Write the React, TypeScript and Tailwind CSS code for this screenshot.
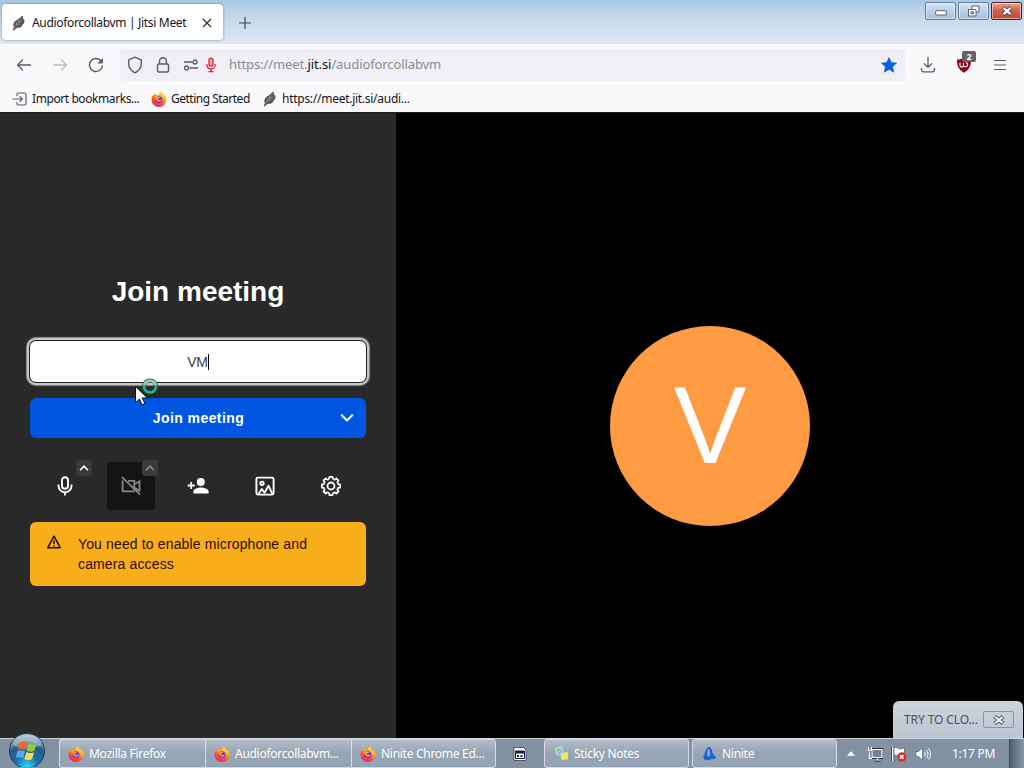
import type { ReactNode } from 'react'
import { clsx } from 'clsx'

function Feather({ className }: { className?: string }) {
  return (
    <svg viewBox="0 0 16 16" className={clsx('size-4 shrink-0', className)}>
      <path d="M11.300.5c.7 1 .8 2 .4 3 1.200.4 1.800 1.500 1.800 2.800-.1 2-1.200 3-2.300 3.700.2 1-.8 2.200-2.200 2.400-1.600.4-2.800 0-4.200 1L2.500 15.500l-.9-.5 1.300-2.500c-.9-2-.6-4.500.9-6C5.200 4.800 7.300 4.500 8.300 3.300 9.200 2.400 10.300 1.500 11.300.5z" fill="#55565a" />
      <path d="M3.500 12.500L10.500 3.500M5.500 10V7M5.200 10.600l4.300-1.600M7.200 8l4-1.900M7.400 7.300L8 4.800" stroke="#a4a5a8" strokeWidth=".6" fill="none" />
    </svg>
  )
}

function Firefox({ id }: { id: string }) {
  return (
    <svg viewBox="0 0 16 16" className="size-4 shrink-0">
      <defs>
        <linearGradient id={id} x1=".8" y1="0" x2=".25" y2="1">
          <stop offset="0" stopColor="#fff04c" />
          <stop offset=".35" stopColor="#ffae20" />
          <stop offset=".65" stopColor="#ff5036" />
          <stop offset="1" stopColor="#e91e68" />
        </linearGradient>
      </defs>
      <path d="M9.300.4c1.200.7 2 1.800 2.500 2.900.5.400 1 .8 1.200 1.400.1-.5 0-.9-.1-1.300 1.700 1.300 2.600 3.100 2.600 5.100a7.500 7.500 0 0 1-15 .2c0-2.200.8-3.700 1.600-4.700 0 .5.100.8.200 1.100.3-1.300 1-2.300 2.100-3-.1.800.2 1.400.7 1.800.8 0 1.500.1 2.300.4C7.800 3 8.300 1.600 9.300.4z" fill={`url(#${id})`} />
      <circle cx="8" cy="8.700" r="3.500" fill="#7542d6" />
      <path d="M3 5.300c1.300-.8 2.900-.5 3.900.5 1 .1 1.900.1 2 .6-.3.800-1.600.9-2 1.300-.2.700.4 1.400 1.300 1.300 1-.1 1.700-.6 2.500-.1-.5 1.500-2 2-3.300 1.500C5.500 10.200 5.200 8.100 3 5.300z" fill="#ff9a20" />
    </svg>
  )
}

function WindowButtons() {
  const base = 'flex h-[18px] items-center justify-center rounded-[2px] border shadow-[inset_0_0_0_1px_#ffffff80]'
  return (
    <div className="flex h-[20px] gap-[2px] pt-[2px] pr-[2px]">
      <div className={clsx(base, 'w-[31px] border-[#5f7c9e] bg-linear-to-b from-[#d7e5f4] via-[#bed2e8] via-45% to-[#a5bfdc]')}>
        <svg viewBox="0 0 12 6" className="mt-[4px] h-[6px] w-3">
          <rect x=".7" y=".7" width="10.600" height="4.300" rx=".5" fill="#fff" stroke="#55647a" />
        </svg>
      </div>
      <div className={clsx(base, 'w-[31px] border-[#5f7c9e] bg-linear-to-b from-[#d7e5f4] via-[#bed2e8] via-45% to-[#a5bfdc]')}>
        <svg viewBox="0 0 14 12" className="h-3 w-[14px]" fill="#fff" stroke="#55647a">
          <path d="M5 1h7v6H5z" />
          <path d="M1.500 4.500h7.500v6.500H1.500z" />
          <path d="M4 6.800h2.500v2H4z" fill="#9fb6d0" />
        </svg>
      </div>
      <div className={clsx(base, 'w-[31px] border-[#5c1d1c] bg-linear-to-b from-[#e5a696] via-[#cf6450] via-45% to-[#c24331]')}>
        <svg viewBox="0 0 12 10" className="h-[10px] w-3">
          <path d="M2.200 1.500l7.600 7M9.800 1.500l-7.600 7" stroke="#5a3440" strokeWidth="4" />
          <path d="M2.500 1.800l7 6.400M9.500 1.800l-7 6.400" stroke="#fff" strokeWidth="2.400" />
        </svg>
      </div>
    </div>
  )
}

function TabStrip() {
  return (
    <div className="flex h-11 items-start bg-linear-to-b from-[#a9c8e4] via-[#c5daec] via-40% to-[#dce9f4]">
      <div className="mt-[4px] ml-[2px] flex h-9 w-[221px] items-center rounded bg-white pt-px pl-[9px] shadow-[0_0_3px_#0000005c]">
        <Feather />
        <span className="ml-[5px] w-[155px] text-[12px] tracking-[-0.32px] whitespace-nowrap text-[#15141a]">
          Audioforcollabvm | Jitsi Meet
        </span>
        <svg viewBox="0 0 10 10" className="ml-[15px] size-[10px]" stroke="#2b2a33" strokeWidth="1.100">
          <path d="M1 1l8 8M9 1L1 9" />
        </svg>
      </div>
      <svg viewBox="0 0 12 12" className="mt-[17px] ml-[16px] size-3" stroke="#45464d" strokeWidth="1.200">
        <path d="M6 0v12M0 6h12" />
      </svg>
      <div className="flex-1" />
      <WindowButtons />
    </div>
  )
}

function NavBar() {
  return (
    <div className="flex h-[42px] items-center bg-[#f9f9fb] pl-4 text-[#5b5b66]">
      <svg viewBox="0 0 16 16" className="size-4" fill="none" stroke="currentColor" strokeWidth="1.300" strokeLinecap="round" strokeLinejoin="round">
        <path d="M14.500 8H1.500M6.500 3L1.500 8l5 5" />
      </svg>
      <svg viewBox="0 0 16 16" className="ml-[20px] size-4 text-[#bcbcc2]" fill="none" stroke="currentColor" strokeWidth="1.300" strokeLinecap="round" strokeLinejoin="round">
        <path d="M1.500 8h13M9.500 3l5 5-5 5" />
      </svg>
      <svg viewBox="0 0 16 16" className="ml-[20px] size-4" fill="none" stroke="currentColor" strokeWidth="1.400">
        <path d="M13.300 4.200A6.500 6.500 0 1 0 14.500 8.500" />
        <path d="M14.900 1v5.500H9.400z" fill="currentColor" stroke="none" />
      </svg>
      <div className="ml-4 flex h-8 w-[785px] items-center rounded bg-[#f0f0f4] pl-[7px]">
        <svg viewBox="0 0 16 18" className="h-[18px] w-4" fill="none" stroke="currentColor" strokeWidth="1.400" strokeLinejoin="round">
          <path d="M8 1.200l6.300 2.600v3.700c0 4.400-2.700 7.500-6.300 9.300-3.600-1.800-6.300-4.900-6.300-9.300V3.800z" />
        </svg>
        <svg viewBox="0 0 14 16" className="ml-[13px] h-4 w-[14px]" fill="none" stroke="currentColor" strokeWidth="1.400">
          <path d="M3.500 7V4.200a3.400 3.400 0 0 1 6.900 0V7" />
          <rect x="1.500" y="7" width="11" height="8" rx="1.300" />
        </svg>
        <svg viewBox="0 0 16 12" className="ml-[13px] h-3 w-4" fill="none" stroke="currentColor" strokeWidth="1.300">
          <path d="M1 3h8.500M6.500 9H15" />
          <circle cx="12" cy="3" r="2" />
          <circle cx="3.500" cy="9" r="2" />
        </svg>
        <svg viewBox="0 0 10 16" className="ml-[7px] h-4 w-[10px]" fill="none" stroke="#d7263f" strokeWidth="1.300">
          <rect x="3" y="1.200" width="4" height="8" rx="2" fill="#f3a3ae" />
          <path d="M.8 7v.8a4.200 4.200 0 0 0 8.400 0V7M5 12v2.500M2.500 14.700h5" />
        </svg>
        <span className="ml-[13px] text-[13px] tracking-[-0.1px] whitespace-nowrap text-[#8a8a94]">
          https://meet.<span className="text-[#15141a]">jit.si</span>/audioforcollabvm
        </span>
        <div className="flex-1" />
        <svg viewBox="0 0 16 16" className="mr-2 size-4">
          <path d="M8 .6l2.300 4.900 5.300.6-4 3.600 1.200 5.500L8 12.500l-4.800 2.700 1.200-5.500-4-3.600 5.300-.6z" fill="#0761e2" stroke="#0761e2" strokeLinejoin="round" strokeWidth=".6" />
        </svg>
      </div>
      <svg viewBox="0 0 16 16" className="ml-[15px] size-4" fill="none" stroke="currentColor" strokeWidth="1.300" strokeLinecap="round" strokeLinejoin="round">
        <path d="M8 .5v9.500M4.300 6.800L8 10.200l3.700-3.400M1.500 11.500v1.300a2 2 0 0 0 2 2h9a2 2 0 0 0 2-2v-1.300" />
      </svg>
      <div className="relative ml-5 size-4">
        <svg viewBox="0 0 16 16" className="size-4">
          <path d="M8 .5C6 2 3.500 2.500 1 2.600 1 9 2.500 12.800 8 15.700 13.500 12.800 15 9 15 2.600 12.500 2.500 10 2 8 .5z" fill="#8f0010" />
          <path d="M4 5.500v3a1.700 1.700 0 0 0 3.400 0v-2.500M7.400 8.500c.3 1.900 4.300 1.700 4.300-.8 0-1.200-.8-1.900-2-1.900" fill="none" stroke="#fff" strokeWidth="1.100" />
        </svg>
        <span className="absolute top-[-6px] left-[6px] flex h-[11px] w-[14px] items-center justify-center rounded-[2px] bg-[#646468] text-[9px] font-bold text-white">
          2
        </span>
      </div>
      <svg viewBox="0 0 12 12" className="ml-[22px] size-3" stroke="currentColor" strokeWidth="1.200">
        <path d="M0 1.500h12M0 6h12M0 10.500h12" />
      </svg>
    </div>
  )
}

function Bookmarks() {
  return (
    <div className="flex h-[26px] items-center bg-[#f9f9fb] pl-[12px] text-[12px] whitespace-nowrap text-[#15141a]">
      <svg viewBox="0 0 16 14" className="h-[14px] w-4" fill="none" stroke="#5b5b66" strokeWidth="1.200">
        <path d="M5 4V2.500a1.500 1.500 0 0 1 1.500-1.500h6A1.500 1.500 0 0 1 14 2.500v9a1.500 1.500 0 0 1-1.500 1.500h-6A1.500 1.500 0 0 1 5 11.500V10M.5 7H10M7.500 4.200L10.300 7 7.500 9.800" />
      </svg>
      <span className="ml-[4px] w-[108px] tracking-[-0.42px]">Import bookmarks...</span>
      <div className="ml-[11px] flex">
        <Firefox id="ff-bookmark" />
      </div>
      <span className="ml-[4px] w-[79px] tracking-[-0.5px]">Getting Started</span>
      <Feather className="ml-[12px]" />
      <span className="ml-[4px] tracking-[-0.27px]">https://meet.jit.si/audi...</span>
    </div>
  )
}

function Chevron({ dim }: { dim?: boolean }) {
  return (
    <span className="absolute -top-[2px] -right-[3px] flex size-4 items-center justify-center rounded-[3px] bg-[#3a3a3b]">
      <svg viewBox="0 0 10 6" className="h-[6px] w-[10px]" fill="none" stroke={dim ? '#8b8b8c' : '#fff'} strokeWidth="1.600">
        <path d="M1 5.200L5 1.200l4 4" />
      </svg>
    </span>
  )
}

function ToolButton({ children, off, menu }: { children: ReactNode; off?: boolean; menu?: boolean }) {
  return (
    <div className={clsx('relative flex size-12 items-center justify-center rounded-[3px]', off && 'bg-[#141414]')}>
      {children}
      {menu && <Chevron dim={off} />}
    </div>
  )
}

const teeth = Array.from({ length: 8 }, (_, i) => i * 45)

function Toolbox() {
  return (
    <div className="mt-6 ml-[11px] flex gap-[19px] self-start">
      <div className="-mr-px">
        <ToolButton menu>
          <svg viewBox="0 0 24 24" className="size-6" fill="none" stroke="#fff" strokeWidth="1.900">
            <rect x="9" y="3.300" width="6" height="11.400" rx="3" />
            <path d="M5.500 10.500v1.300a6.500 6.500 0 0 0 13 0v-1.300M12 18.300V21.500" />
          </svg>
        </ToolButton>
      </div>
      <ToolButton off menu>
        <svg viewBox="0 0 24 24" className="size-6" fill="none" stroke="#858586" strokeWidth="1.800">
          <path d="M3.600 6.500v10.800h12M9 6.800h6.300v9M15.500 10.300l5-3v9.500l-5-3M3 3.200l18 17.500" />
        </svg>
      </ToolButton>
      <ToolButton>
        <svg viewBox="0 0 24 24" className="size-6" fill="#fff">
          <circle cx="14.800" cy="8" r="4" />
          <path d="M7.400 19.500v-2c0-2.800 5-4 7.500-4s7.700 1.200 7.700 4v2zM4.300 8h1.800v2.600h2.700v1.800H6.100V15H4.300v-2.600H1.700v-1.800h2.600z" />
        </svg>
      </ToolButton>
      <div className="-mr-px">
        <ToolButton>
          <svg viewBox="0 0 24 24" className="size-6" fill="none" stroke="#fff" strokeWidth="1.900" strokeLinejoin="round">
            <rect x="3.400" y="3.600" width="17.200" height="17" rx="1.500" />
            <circle cx="9" cy="9.300" r="1.700" />
            <path d="M5.500 20l3.300-5 2.700 3.800 4-7 4 8.200" />
          </svg>
        </ToolButton>
      </div>
      <ToolButton>
        <svg viewBox="0 0 24 24" className="size-6" fill="none" stroke="#fff" strokeWidth="1.800">
          <circle cx="12" cy="12" r="3.500" />
          {teeth.map((deg) => (
            <path key={deg} transform={`rotate(${deg} 12 12)`} d="M9.300 5.500c.8-.4 1.100-1 1.200-2.600h3c.1 1.600.4 2.200 1.200 2.600" strokeLinejoin="round" />
          ))}
        </svg>
      </ToolButton>
    </div>
  )
}

function BusyCursor() {
  return (
    <svg viewBox="0 0 26 30" className="absolute top-[264px] left-[134px] h-[30px] w-[26px]">
      <circle cx="16" cy="9.500" r="6" fill="none" stroke="#07543f" strokeWidth="4" />
      <circle cx="16" cy="9.500" r="6" fill="none" stroke="#2fae94" strokeWidth="2.600" />
      <path d="M10.300 8a6 6 0 0 1 11.400 0" fill="none" stroke="#a8c5bd" strokeWidth="2.600" />
      <path d="M1.500 9.500v16.200l3.900-3.600 2.800 5.700 2.700-1.300-2.800-5.600h5.300z" fill="#fff" stroke="#111" strokeWidth="1" />
    </svg>
  )
}

function JoinPanel() {
  return (
    <div className="relative flex w-[396px] flex-col items-center bg-[#292929] px-[30px] font-['Liberation_Sans',Arial,sans-serif]">
      <h1 className="mt-[161px] text-[28px] leading-9 font-bold text-white">Join meeting</h1>
      <div className="mt-[31px] flex h-[41px] w-[336px] items-center justify-center rounded-[6px] bg-white pt-px text-[14px] tracking-[-0.3px] text-[#3d3d3d] shadow-[0_0_0_1px_#222,0_0_0_3px_#c8c8c8,0_0_1px_4px_#909090]">
        VM
        <span className="h-4 w-px bg-black" />
      </div>
      <div className="mt-[16px] flex h-10 w-[336px] items-center rounded-[6px] bg-[#0056e0] pl-[37px] text-white">
        <span className="flex-1 pl-px text-center text-[14px] font-bold tracking-[0.42px]">Join meeting</span>
        <svg viewBox="0 0 14 8" className="mr-3 ml-[11px] h-2 w-[14px]" fill="none" stroke="#fff" strokeWidth="2" strokeLinecap="round" strokeLinejoin="round">
          <path d="M1.800 1.300L7 6.500l5.200-5.200" />
        </svg>
      </div>
      <Toolbox />
      <div className="mt-3 flex h-16 w-[336px] rounded-[6px] bg-[#f8ae1a] pt-[12px] pl-4 text-[#2a0c02]">
        <svg viewBox="0 0 16 16" className="size-4" fill="none" stroke="currentColor" strokeWidth="1.500" strokeLinejoin="round">
          <path d="M8 2.200l6.300 11.600H1.700zM8 6.500v3.500M8 11v1.500" />
        </svg>
        <p className="ml-4 w-[260px] text-[14px] leading-5 tracking-[0.14px]">
          You need to enable microphone and
          <br />
          camera access
        </p>
      </div>
      <BusyCursor />
    </div>
  )
}

function Task({ icon, label, className }: { icon: ReactNode; label: string; className?: string }) {
  return (
    <div className={clsx('flex h-[29px] items-center border border-[#d3dce5] bg-linear-to-b from-[#b2bbc7] via-[#98a4b3] via-50% to-[#94a3b4] text-[12px] whitespace-nowrap text-white', className)}>
      {icon}
      <span className="ml-[5px] tracking-[-0.28px]">{label}</span>
    </div>
  )
}

function StartOrb() {
  return (
    <svg viewBox="0 0 38 34" className="absolute -top-[6px] left-[8px] h-[34px] w-[38px]">
      <defs>
        <radialGradient id="orb" cx=".5" cy=".95" r=".85">
          <stop offset="0" stopColor="#36d8ff" />
          <stop offset=".4" stopColor="#1670ad" />
          <stop offset=".75" stopColor="#285b80" />
          <stop offset="1" stopColor="#a9c5d6" />
        </radialGradient>
      </defs>
      <circle cx="19" cy="18" r="17.500" fill="url(#orb)" stroke="#203c54" />
      <path d="M5 12a16 13 0 0 1 28 0c-8 5-20 5-28 0z" fill="#fff" opacity=".3" />
      <path d="M11.500 9.500c3-1.500 5.500-1.300 7.500.2L17.300 17c-2.200-1.500-4.500-1.600-7.500-.3z" fill="#f0642d" />
      <path d="M20.300 10.500c2.600 1.400 5 1.400 8-.1l-1.900 7.300c-2.800 1.400-5.500 1.300-7.800-.1z" fill="#93c83f" />
      <path d="M9.500 18c3-1.300 5.300-1.100 7.500.3l-1.900 7c-2.200-1.400-4.300-1.500-7.300-.2z" fill="#50ade9" />
      <path d="M18.300 19c2.300 1.400 4.700 1.400 7.700.2l-1.900 7.100c-2.900 1.300-5.300 1.300-7.700-.1z" fill="#ffd34c" />
    </svg>
  )
}

function Tray() {
  return (
    <div className="flex flex-1 items-center">
      <svg viewBox="0 0 8 5" className="ml-[10px] h-[5px] w-2">
        <path d="M4 .3L8 4.700H0z" fill="#fff" />
      </svg>
      <svg viewBox="0 0 16 16" className="ml-[12px] size-4">
        <path d="M5 3.500h10v8H5zM7 14h7M10.500 11.500V14" fill="#4c6075" stroke="#202c38" strokeWidth="2.800" />
        <path d="M5 3.500h10v8H5zM7 14h7M10.500 11.500V14M2.500 6v6.500H5M1.500 1v3.500h3V1" fill="#738394" stroke="#fff" strokeWidth="1.200" />
      </svg>
      <svg viewBox="0 0 16 16" className="ml-[8px] size-4">
        <path d="M1.800 1v14" stroke="#334" strokeWidth="3" />
        <path d="M1.800 1v14" stroke="#fff" strokeWidth="1.500" />
        <path d="M3 1.500c3-1 4 1.500 6 1.300 2 0 3-.8 4.500-.3v7c-3-.8-3 .8-5.500.4C6 9.800 5 8.500 3 9z" fill="#fff" stroke="#445" strokeWidth=".6" />
        <circle cx="10.800" cy="11" r="4.700" fill="#d9302a" />
        <path d="M9 9.200l3.600 3.600M12.600 9.200L9 12.800" stroke="#fff" strokeWidth="1.500" />
      </svg>
      <svg viewBox="0 0 16 16" className="ml-[8px] size-4">
        <path d="M1 5.500h2.500L7.500 2v12l-4-3.500H1z" fill="#fff" stroke="#53606e" strokeWidth=".7" />
        <path d="M9.500 5.800c1 1.500 1 3 0 4.500M11.600 4c1.900 2.600 1.900 5.400 0 8M13.600 2.500c2.500 3.500 2.500 7.500 0 11" fill="none" stroke="#fff" />
      </svg>
      <span className="ml-[21px] text-[12px] tracking-[-0.3px] whitespace-nowrap text-white">1:17 PM</span>
      <div className="flex-1" />
      <div className="h-[30px] w-[15px] border-l border-[#3f4d5c] bg-linear-to-r from-[#51606f] to-[#8999a9]" />
    </div>
  )
}

function Taskbar() {
  return (
    <div className="relative flex h-[30px] items-center border-t border-[#cbd3dc] bg-[#8391a3]">
      <StartOrb />
      <Task className="ml-[59px] w-[146px] rounded-l-[3px] border-r-0 pl-[8px]" icon={<Firefox id="ff-1" />} label="Mozilla Firefox" />
      <Task className="w-[146px] border-r-0 pl-[8px]" icon={<Firefox id="ff-2" />} label="Audioforcollabvm..." />
      <Task className="w-[145px] rounded-r-[3px] pl-[8px]" icon={<Firefox id="ff-3" />} label="Ninite Chrome Ed..." />
      <svg viewBox="0 0 14 14" className="ml-[17px] size-[14px]">
        <path d="M1 .5h9.500L13 3v10.500H1z" fill="#fff" stroke="#262626" strokeWidth=".7" />
        <path d="M2.500 4h9v7.500h-9z" fill="#fff" stroke="#101b58" />
        <path d="M2.500 4h9v2.500h-9z" fill="#101b58" />
        <path d="M4 8h2v2H4zM7.500 8h2v2h-2z" fill="#222" />
      </svg>
      <Task
        className="ml-[17px] w-[145px] rounded-[3px] pl-[9px]"
        label="Sticky Notes"
        icon={
          <svg viewBox="0 0 16 16" className="size-[15px]">
            <path d="M1 3l7-2.500 2 6-7 3z" fill="#8bd0a0" stroke="#d7f3dd" strokeWidth=".7" />
            <path d="M3 7l6-3 3 6-6 2z" fill="#8fc4dc" />
            <path d="M7 7.500l8-1v7.500l-7 1z" fill="#f7e463" />
          </svg>
        }
      />
      <Task
        className="ml-[3px] w-[145px] rounded-[3px] pl-[9px]"
        label="Ninite"
        icon={
          <svg viewBox="0 0 16 16" className="size-[15px]">
            <path d="M7.500.5c2.500 1.700 4 4.500 3.900 8 1.300.8 2.600 2.200 3.600 4-2 1.500-4 2-6 1.500-2 1.500-5.500 1.500-7-.5-1.200-2 .3-3.500 1-6C3.700 4.500 5 2 7.500.5z" fill="#245fd0" />
            <path d="M7 2.500C5 5 5 8.500 6 11c1.500.5 2.500-.3 2.700-1.500C9 7 8.500 4.500 7 2.500z" fill="#77aaf5" />
          </svg>
        }
      />
      <Tray />
      <div className="absolute right-px bottom-[30px] flex h-[37px] w-[130px] items-center rounded-t-[6px] bg-linear-to-b from-[#ccd4dc] to-[#bcc6d1] pl-[11px] text-[12px] whitespace-nowrap text-[#49515b]">
        <span className="w-[75px] tracking-[-0.1px]">TRY TO CLO...</span>
        <div className="ml-[4px] flex h-[17px] w-[31px] items-center justify-center rounded-[2px] border border-[#8996a4]">
          <svg viewBox="0 0 12 10" className="h-[10px] w-3">
            <path d="M2 1.500l8 7M10 1.500l-8 7" stroke="#4a5868" strokeWidth="3.800" />
            <path d="M2.500 2l7 6M9.500 2l-7 6" stroke="#fff" strokeWidth="1.800" />
          </svg>
        </div>
      </div>
    </div>
  )
}

export default function App() {
  return (
    <div className="flex h-[768px] w-[1024px] flex-col overflow-hidden bg-black font-['Noto_Sans','Open_Sans',sans-serif]">
      <TabStrip />
      <NavBar />
      <Bookmarks />
      <div className="flex flex-1 border-t border-[#202020]">
        <JoinPanel />
        <div className="flex flex-1 items-center justify-center">
          <div className="flex size-[200px] items-center justify-center rounded-full bg-[#ff9b42] font-['Liberation_Sans',Arial,sans-serif] text-[109px] leading-none text-white">
            V
          </div>
        </div>
      </div>
      <Taskbar />
    </div>
  )
}
